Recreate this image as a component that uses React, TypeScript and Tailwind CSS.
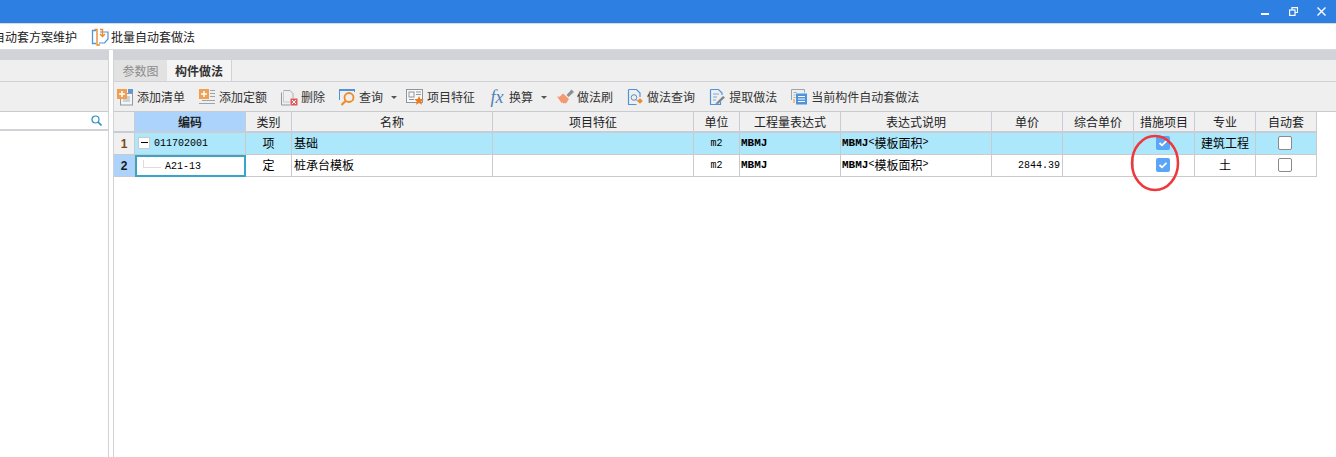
import React from "react";

const cols = "grid grid-cols-[21px_111px_46px_201px_201px_46px_101px_151px_71px_71px_61px_61px_61px]";
const F = "font-['Noto_Sans_CJK_SC','Liberation_Sans',sans-serif]";
const mono = "font-['Liberation_Mono','Noto_Sans_CJK_SC',monospace]";

function Check() {
  return (
    <span className="flex h-[14px] w-[14px] -translate-x-[1px] items-center justify-center rounded-[2px] bg-[#5aa5f5]">
      <svg width="10" height="10" viewBox="0 0 10 10" fill="none">
        <path d="M1.500 5 4 7.300 8.500 2.800" stroke="#fff" strokeWidth="1.800" />
      </svg>
    </span>
  );
}
function Box() {
  return <span className="block h-[14px] w-[14px] -translate-x-[1px] rounded-[2px] border border-[#8a8a8a] bg-white" />;
}

function IconAddList() {
  return (
    <svg width="18" height="18" viewBox="0 0 18 18">
      <rect x="4.500" y="5.500" width="12" height="11.500" fill="#f4f4f4" stroke="#8f9aa2" />
      <path d="M7 9h7M7 11h7M7 13h7" stroke="#a7b0b6" />
      <rect x="12" y="1" width="5" height="4" fill="#5b9bd5" />
      <rect x="1" y="1" width="10" height="10" fill="#f0a050" />
      <path d="M6 3v6M3 6h6" stroke="#fff" strokeWidth="1.500" />
    </svg>
  );
}
function IconAddQuota() {
  return (
    <svg width="18" height="18" viewBox="0 0 18 18">
      <rect x="1" y="1" width="10" height="10" fill="#f0a050" />
      <path d="M6 3v6M3 6h6" stroke="#fff" strokeWidth="1.500" />
      <path d="M12 2.500h5M12 5.500h5M12 8.500h5M4 12.500h13M1 15.500h16" stroke="#9aa5ad" />
    </svg>
  );
}
function IconDelete() {
  return (
    <svg width="18" height="18" viewBox="0 0 18 18" fill="none">
      <path d="M3.500 2.500H10l3 3V10" stroke="#a5adb3" />
      <path d="M1.500 4.500V17H10" stroke="#8f9aa2" />
      <path d="M3.500 2.500V14H10" stroke="#c4cbd0" />
      <rect x="10.500" y="10.500" width="7" height="7" fill="#dd5a5a" />
      <path d="M12 12l4 4M16 12l-4 4" stroke="#fff" />
    </svg>
  );
}
function IconQuery() {
  return (
    <svg width="18" height="18" viewBox="0 0 18 18" fill="none">
      <path d="M1.500 12V2h15v2" stroke="#4d94dc" />
      <rect x="1" y="1" width="16" height="2" fill="#4d94dc" />
      <circle cx="11" cy="9.500" r="4.500" stroke="#ee8a2c" strokeWidth="1.800" />
      <path d="M7.500 13 3.500 17" stroke="#ee8a2c" strokeWidth="2.200" />
    </svg>
  );
}
function IconFeature() {
  return (
    <svg width="18" height="18" viewBox="0 0 18 18" fill="none">
      <rect x="0.500" y="1.500" width="16" height="13" fill="#f8f8f8" stroke="#8e979e" />
      <rect x="3" y="4" width="5" height="5" stroke="#8e979e" />
      <path d="M10 4h5M10 6.500h5M3 11.500h5" stroke="#8e979e" />
      <path d="M13 8l1.400 3 3.300.3-2.500 2.200.8 3.300-3-1.700-3 1.700.8-3.300-2.500-2.200 3.300-.3z" fill="#ee7a22" />
    </svg>
  );
}
function IconBrush() {
  return (
    <svg width="18" height="18" viewBox="0 0 18 18">
      <path d="M10.500 7l5-5.500 2.500 2.500-5.500 5z" fill="#8a9298" />
      <path d="M7 5.500l6 5.500-3 4.500-1.500-.5-1 .5-1-1-1 .5L1 8.500l2.500.2 1.500-1.200z" fill="#f49a72" />
    </svg>
  );
}
function IconMethodQuery() {
  return (
    <svg width="18" height="18" viewBox="0 0 18 18" fill="none">
      <path d="M2.500 1.500h8l3.500 3.500v4M2.500 1.500v15h8" stroke="#4d94dc" strokeWidth="1.200" />
      <circle cx="8" cy="9.500" r="2.800" stroke="#5d8fb8" />
      <path d="M10 11.500l2 2" stroke="#5d8fb8" />
      <rect x="12" y="11" width="4" height="4" fill="#ee8a2c" transform="rotate(45 14 13)" />
    </svg>
  );
}
function IconExtract() {
  return (
    <svg width="18" height="18" viewBox="0 0 18 18" fill="none">
      <path d="M2.500 1.500h8l3.500 3.500v2M2.500 1.500v15h10v-3" stroke="#4d94dc" strokeWidth="1.200" />
      <path d="M5 6h6M5 9h4M5 12h3" stroke="#7fa8cc" />
      <path d="M8 15l7-7 2 1.500-7 6.500z" fill="#7d868c" />
      <path d="M6.500 17l1.500-2 2 1z" fill="#4d94dc" />
    </svg>
  );
}
function IconCurrent() {
  return (
    <svg width="18" height="18" viewBox="0 0 18 18" fill="none">
      <path d="M1.500 12V1.500h13v3" stroke="#9aa5ad" />
      <path d="M3.500 4.500h3M3.500 7h2M3.500 9.500h2" stroke="#a5adb3" />
      <path d="M3 12h2M3 14h2" stroke="#ee8a2c" />
      <rect x="6" y="5.500" width="11" height="11" fill="#4d94dc" />
      <path d="M8 8.500h7M8 11h7M8 13.500h7" stroke="#fff" />
    </svg>
  );
}
function Caret() {
  return <span className="ml-[5px] mr-[1px] mt-[1px] h-0 w-0 border-x-[3px] border-t-[3px] border-x-transparent border-t-[#555]" />;
}

function Tool({ icon, label, caret, mr }: { icon: React.ReactNode; label: string; caret?: boolean; mr: string }) {
  return (
    <div className={`flex items-center gap-[3px] ${mr}`}>
      {icon}
      <span className="whitespace-nowrap text-[12px] leading-none text-[#333]">{label}</span>
      {caret && <Caret />}
    </div>
  );
}

const heads = ["", "编码", "类别", "名称", "项目特征", "单位", "工程量表达式", "表达式说明", "单价", "综合单价", "措施项目", "专业", "自动套"];

function Cell({ children, className = "", bg }: { children?: React.ReactNode; className?: string; bg: string }) {
  return (
    <div className={`flex h-[22px] items-center overflow-hidden border-b border-r border-[#c8cacc] pb-[2px] text-black ${bg} ${className}`}>
      {children}
    </div>
  );
}

function Row({ n, active }: { n: number; active: boolean }) {
  const bg = active ? "bg-[#ade7fb]" : "bg-white";
  const first = active;
  const low = "translate-y-[1px]";
  return (
    <div className={cols}>
      <Cell bg={n === 2 ? "bg-[#acd3fb]" : "bg-[#f0f0f0]"} className="justify-center font-bold">
        <span className={n === 1 ? `${low} font-['Liberation_Sans'] text-[12px] text-[#7a4a12]` : `${low} font-['Liberation_Sans'] text-[12px] text-[#1a1a1a]`}>{n}</span>
      </Cell>
      {first ? (
        <Cell bg={bg} className="pl-[3px]">
          <span className="flex h-[12px] w-[12px] items-center justify-center border border-[#c9c9c9] bg-white">
            <span className="h-px w-[7px] bg-black" />
          </span>
          <span className={`ml-[4px] ${low} ${mono} text-[10px] text-black`}>011702001</span>
        </Cell>
      ) : (
        <div className="flex h-[22px] items-center border-2 border-[#36a5cc] bg-white pb-[2px] pl-[6px]">
          <span className="mb-[3px] h-[8px] w-[18px] border-b border-l border-[#dcdcdc]" />
          <span className={`ml-[4px] ${low} ${mono} text-[10px] text-black`}>A21-13</span>
        </div>
      )}
      <Cell bg={bg} className="justify-center text-[12px]">{first ? "项" : "定"}</Cell>
      <Cell bg={bg} className="pl-[2px] text-[12px]">{first ? "基础" : "桩承台模板"}</Cell>
      <Cell bg={bg} />
      <Cell bg={bg} className={`justify-center ${mono} text-[10px]`}><span className={low}>m2</span></Cell>
      <Cell bg={bg} className={`pl-[1px] ${mono} text-[11px] font-bold`}><span className={low}>MBMJ</span></Cell>
      <Cell bg={bg} className="pl-[1px] text-[12px]">
        <span className={`${low} ${mono} text-[11px] font-bold`}>MBMJ</span>
        <span className={`${mono} text-[10px]`}>&lt;</span>
        模板面积
        <span className={`${mono} text-[10px]`}>&gt;</span>
      </Cell>
      <Cell bg={bg} className={`justify-end pr-[2px] ${mono} text-[10px]`}><span className={low}>{first ? "" : "2844.39"}</span></Cell>
      <Cell bg={bg} />
      <Cell bg={bg} className="justify-center"><Check /></Cell>
      <Cell bg={bg} className="justify-center text-[12px]">{first ? "建筑工程" : "土"}</Cell>
      <Cell bg={bg} className="justify-center"><Box /></Cell>
    </div>
  );
}

export default function App() {
  return (
    <div className={`relative flex h-[457px] w-[1336px] flex-col overflow-hidden bg-white ${F}`}>
      <div className="flex h-[23px] shrink-0 items-center justify-end bg-[#2d7fe2] pr-[10px] text-white">
        <span className="h-[2px] w-[8px] translate-y-[2px] bg-white" />
        <svg className="ml-[20px]" width="9" height="9" viewBox="0 0 9 9" fill="none" stroke="#fff">
          <path d="M3 3V.700h5.500V5.500H6" strokeWidth="1.200" />
          <rect x="0.600" y="3" width="5.400" height="5.400" strokeWidth="1.200" />
        </svg>
        <svg className="ml-[19px]" width="9" height="9" viewBox="0 0 9 9" stroke="#fff" strokeWidth="1.400">
          <path d="M.5.5l8 8M8.500.5l-8 8" />
        </svg>
      </div>
      <div className="flex h-[27px] shrink-0 items-center overflow-hidden border-y border-[#d8dadd] bg-white">
        <span className="ml-[-7px] whitespace-nowrap text-[12px] text-[#222]">自动套方案维护</span>
        <svg className="ml-[14px]" width="18" height="18" viewBox="0 0 18 18" fill="none">
          <path d="M5 2.500H1.500v13H5" stroke="#4d94dc" strokeWidth="1.300" />
          <path d="M9 4h8v7l-3.500 4H8" stroke="#4d94dc" strokeWidth="1.200" />
          <path d="M3.500 1.500h2.500v15.500h3" stroke="#ee8a2c" strokeWidth="1.400" />
          <path d="M9 1.500h2.500V8M9 6l2.500 2.500L14 6" stroke="#ee8a2c" strokeWidth="1.400" />
        </svg>
        <span className="ml-[2px] whitespace-nowrap text-[12px] text-[#222]">批量自动套做法</span>
      </div>

      <div className="flex min-h-0 flex-1">
        <div className="flex w-[108px] shrink-0 flex-col">
          <div className="h-[10px] bg-[#d2d3d8]" />
          <div className="h-[22px] border-b border-[#d0d2d5] bg-[#efefef]" />
          <div className="h-[30px] border-b border-[#c8cacc] bg-[#efefef]" />
          <div className="flex h-[19px] items-center justify-end border-b-2 border-[#d0d2d5] bg-white pr-[6px]">
            <svg width="11" height="11" viewBox="0 0 11 11" fill="none" stroke="#2f8fc4">
              <circle cx="4.500" cy="4.500" r="3.500" strokeWidth="1.200" />
              <path d="M7 7l3.500 3.500" strokeWidth="1.600" />
            </svg>
          </div>
        </div>
        <div className="w-[6px] shrink-0 border-x border-[#d0d2d5] bg-white" />

        <div className="flex min-w-0 flex-1 flex-col">
          <div className="h-[10px] shrink-0 bg-[#d2d3d8]" />
          <div className="flex h-[22px] shrink-0 border-b border-[#d0d2d5] bg-[#efefef] text-[12px]">
            <div className="flex w-[53px] items-center justify-center bg-[#e2e2e2] text-[#8c8c8c]">参数图</div>
            <div className="flex w-[65px] items-center justify-center border-r border-[#d0d2d5] bg-[#f4f4f4] font-bold text-[#333]">构件做法</div>
          </div>
          <div className="flex h-[30px] shrink-0 items-center border-b border-[#c8cacc] bg-[#efefef] pl-[2px]">
            <Tool icon={<IconAddList />} label="添加清单" mr="mr-[13px]" />
            <Tool icon={<IconAddQuota />} label="添加定额" mr="mr-[13px]" />
            <Tool icon={<IconDelete />} label="删除" mr="mr-[13px]" />
            <Tool icon={<IconQuery />} label="查询" caret mr="mr-[8px]" />
            <Tool icon={<IconFeature />} label="项目特征" mr="mr-[13px]" />
            <Tool icon={<span className="w-[18px] text-center font-['Liberation_Serif'] text-[18px] italic leading-none text-[#4d7fb8]">fx</span>} label="换算" caret mr="mr-[8px]" />
            <Tool icon={<IconBrush />} label="做法刷" mr="mr-[13px]" />
            <Tool icon={<IconMethodQuery />} label="做法查询" mr="mr-[13px]" />
            <Tool icon={<IconExtract />} label="提取做法" mr="mr-[13px]" />
            <Tool icon={<IconCurrent />} label="当前构件自动套做法" mr="" />
          </div>
          <div className="min-h-0 flex-1">
            <div className={cols}>
              {heads.map((h, i) => (
                <div
                  key={i}
                  className={`flex h-[21px] items-center justify-center border-b-2 border-r border-[#c8ccd4] text-[12px] text-[#222] ${i === 1 ? "bg-[#acd3fb] font-bold" : "bg-[#f0f0f0]"}`}
                >
                  {h}
                </div>
              ))}
            </div>
            <Row n={1} active />
            <Row n={2} active={false} />
          </div>
        </div>
      </div>

      <svg className="pointer-events-none absolute left-[1128px] top-[134px]" width="54" height="60" viewBox="0 0 54 60" fill="none">
        <ellipse cx="27" cy="29" rx="23" ry="27" stroke="#f0373c" strokeWidth="2.500" />
      </svg>
    </div>
  );
}
